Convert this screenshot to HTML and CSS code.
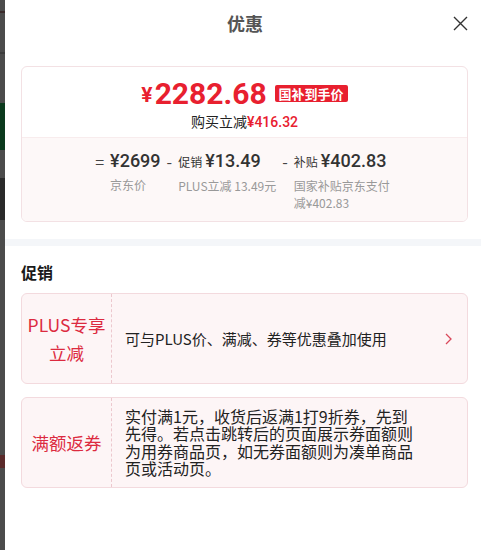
FILE: index.html
```html
<!DOCTYPE html>
<html lang="zh-CN">
<head>
  <meta charset="UTF-8" />
  <meta name="viewport" content="width=device-width, initial-scale=1" />
  <title>优惠</title>
  <link rel="stylesheet" href="styles.css">
</head>
<body>
<div class="page">
  <div class="backdrop"></div>

  <div class="sheet">
    <div class="sheet-head">
      <span class="sheet-title">优惠</span>
      <button class="close" aria-label="关闭">
        <svg width="15" height="15" viewBox="0 0 15 15"><path d="M1 1 L14 14 M14 1 L1 14" stroke="#333" stroke-width="1.4" fill="none"/></svg>
      </button>
    </div>

    <div class="summary">
      <div class="summary-top">
        <div class="final-price"><span class="yen">¥</span>2282.68<span class="badge">国补到手价</span></div>
        <div class="save">购买立减<span class="red">¥416.32</span></div>
      </div>
      <div class="summary-calc">
        <div class="calc-item">
          <span class="op">=</span>
          <div class="calc-box">
            <div class="calc-val">¥2699</div>
            <div class="calc-label">京东价</div>
          </div>
        </div>
        <div class="calc-item">
          <span class="op">-</span>
          <div class="calc-box">
            <div class="calc-val"><small>促销</small>¥13.49</div>
            <div class="calc-label">PLUS立减 13.49元</div>
          </div>
        </div>
        <div class="calc-item">
          <span class="op">-</span>
          <div class="calc-box">
            <div class="calc-val"><small>补贴</small>¥402.83</div>
            <div class="calc-label">国家补贴京东支付减¥402.83</div>
          </div>
        </div>
      </div>
    </div>

    <div class="divider"></div>

    <h2 class="section-title">促销</h2>

    <div class="promo-list">
      <div class="promo">
        <div class="promo-label">PLUS专享<br>立减</div>
        <div class="promo-text short">可与PLUS价、满减、券等优惠叠加使用</div>
        <div class="promo-arrow">
          <svg width="7" height="12" viewBox="0 0 7 12"><path d="M1 1 L6 6 L1 11" stroke="#d9485a" stroke-width="1.3" fill="none"/></svg>
        </div>
      </div>
      <div class="promo">
        <div class="promo-label">满额返券</div>
        <div class="promo-text">实付满1元，收货后返满1打9折券，先到先得。若点击跳转后的页面展示券面额则为用券商品页，如无券面额则为凑单商品页或活动页。</div>
        <div class="promo-arrow"></div>
      </div>
    </div>
  </div>
</div>
</body>
</html>
```

FILE: styles.css
```css
* {
  box-sizing: border-box;
}
body {
  margin: 0;
  font-family: "Noto Sans CJK SC", "Noto Sans", sans-serif;
  color: #222;
  background: #fff;
}
.page {
  display: flex;
  width: 481px;
  height: 550px;
  overflow: hidden;
}
.backdrop {
  width: 5px;
  flex: none;
  background: linear-gradient(to bottom,
    #4b4b4b 0, #4b4b4b 11px, #3a2a2a 11px, #3a2a2a 13px,
    #4b4b4b 13px, #4b4b4b 52px, #3c3c3c 52px, #3c3c3c 54px,
    #4b4b4b 54px, #4b4b4b 103px, #0b3a1d 103px, #0b3a1d 150px,
    #4b4b4b 150px, #4b4b4b 178px, #2a2a2a 178px, #2a2a2a 220px,
    #4b4b4b 220px, #4b4b4b 455px, #5a2a2a 455px, #5a2a2a 468px,
    #4b4b4b 468px);
}
.sheet {
  flex: 1;
  background: #fff;
}
.sheet-head {
  display: grid;
  grid-template-columns: 1fr auto 1fr;
  align-items: center;
  height: 46px;
  padding-left: 4px;
}
.sheet-title {
  grid-column: 2;
  font-size: 18px;
  line-height: 46px;
  font-weight: bold;
  color: #555;
}
.close {
  justify-self: end;
  margin-right: 13px;
  padding: 0;
  border: none;
  background: none;
  width: 15px;
  height: 15px;
  cursor: pointer;
}
.close svg {
  display: block;
}

/* price summary */
.summary {
  margin: 20px 13px 0 16px;
  border: 1px solid #f3e1e4;
  border-radius: 6px;
  overflow: hidden;
}
.summary-top {
  padding: 8px 0 5px;
  text-align: center;
}
.final-price {
  display: flex;
  justify-content: center;
  align-items: center;
  height: 36px;
  color: #e8202f;
  font-family: Roboto, "Noto Sans", sans-serif;
  font-weight: bold;
  font-size: 30px;
}
.yen {
  font-size: 21px;
  margin-right: 2px;
  margin-top: 4px;
}
.badge {
  margin-left: 8px;
  padding: 0 4px;
  border-radius: 2px;
  background: #e8202f;
  color: #fff;
  font-family: "Noto Sans CJK SC", sans-serif;
  font-size: 13px;
  line-height: 17px;
  font-weight: bold;
}
.save {
  font-size: 14px;
  line-height: 20px;
  color: #222;
}
.save .red {
  color: #e8202f;
  font-family: Roboto, sans-serif;
  font-weight: 500;
}
.summary-calc {
  display: flex;
  justify-content: center;
  gap: 6px;
  padding: 11px 0 10px;
  background: #fdf8f8;
  border-top: 1px solid #f8eced;
}
.calc-item {
  display: flex;
  gap: 6px;
}
.op {
  font-size: 16px;
  line-height: 24px;
  color: #444;
}
.calc-val {
  font-family: Roboto, sans-serif;
  font-weight: 500;
  font-size: 18px;
  line-height: 24px;
  color: #333;
  white-space: nowrap;
}
.calc-val small {
  font-family: "Noto Sans CJK SC", sans-serif;
  font-size: 12px;
  font-weight: normal;
  margin-right: 3px;
}
.calc-label {
  margin-top: 3px;
  max-width: 100px;
  font-size: 12px;
  line-height: 17px;
  color: #999;
}

.divider {
  margin-top: 17px;
  height: 7px;
  background: #f4f6f9;
}
.section-title {
  margin: 16px 0 0 16px;
  font-size: 16px;
  line-height: 20px;
  font-weight: bold;
  color: #1a1a1a;
}

/* promotions */
.promo-list {
  display: flex;
  flex-direction: column;
  gap: 13px;
  padding: 11px 13px 0 16px;
}
.promo {
  display: flex;
  min-height: 91px;
  border: 1px solid #f3dade;
  border-radius: 6px;
  background: #fdf5f6;
}
.promo-label {
  width: 90px;
  flex: none;
  display: flex;
  align-items: center;
  justify-content: center;
  text-align: center;
  border-right: 1px dashed #ecc8ce;
  color: #dc2a3f;
  font-size: 17.5px;
  line-height: 28px;
}
.promo-text {
  flex: 1;
  display: flex;
  align-items: center;
  padding-left: 13px;
  font-size: 16px;
  line-height: 17.5px;
  color: #222;
}
.promo-text.short {
  font-size: 15px;
}
.promo-arrow {
  width: 46px;
  flex: none;
  display: flex;
  align-items: center;
  justify-content: flex-end;
  padding-right: 15px;
}
```
